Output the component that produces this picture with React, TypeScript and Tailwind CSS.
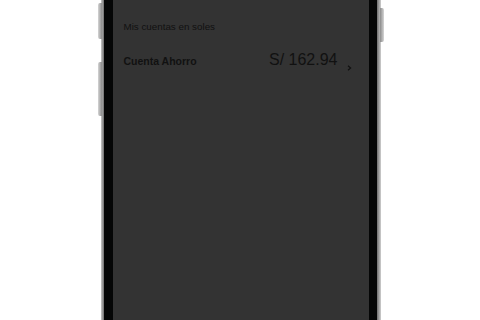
export default function App() {
  return (
    <div className="w-[480px] h-[320px] bg-white flex justify-center overflow-hidden" style={{ fontFamily: '"Liberation Sans", Arial, sans-serif' }}>
      <div className="relative h-full w-[280px] flex ml-[1px]">
        <div className="absolute left-[-3px] top-[3px] h-[36px] w-[4px] rounded-l-[2px] bg-gradient-to-r from-[#d6d6d6] to-[#8a8a8a]" />
        <div className="absolute left-[-3px] top-[62px] h-[54px] w-[4px] rounded-l-[2px] bg-gradient-to-r from-[#d6d6d6] to-[#8a8a8a]" />
        <div className="absolute right-[-3px] top-[8px] h-[34px] w-[4px] rounded-r-[2px] bg-gradient-to-l from-[#d6d6d6] to-[#8a8a8a]" />
        <div className="w-[3px] h-full bg-gradient-to-r from-[#c8c8c8] to-[#6e6e6e]" />
        <div className="w-[9px] h-full bg-[#050606]" />
        <div className="flex-1 h-full bg-[#333333] flex flex-col pl-[11px] pr-[17px] pt-[21px] text-[#111111]">
          <div className="text-[9.8px] leading-[12px] font-normal">Mis cuentas en soles</div>
          <div className="mt-[19px] flex items-start">
            <div className="mt-[3px] text-[10.5px] leading-[12px] font-bold">Cuenta Ahorro</div>
            <div className="ml-auto text-[16px] leading-[16px]">S/ 162.94</div>
            <svg className="ml-[9px] mt-[13px]" width="5" height="6" viewBox="0 0 5 6">
              <path d="M1 0.8 L3.6 3 L1 5.2" stroke="#111111" strokeWidth="1.2" fill="none" />
            </svg>
          </div>
        </div>
        <div className="w-[8px] h-full bg-[#050606]" />
        <div className="w-[4px] h-full bg-gradient-to-r from-[#6e6e6e] to-[#d0d0d0]" />
      </div>
    </div>
  );
}
